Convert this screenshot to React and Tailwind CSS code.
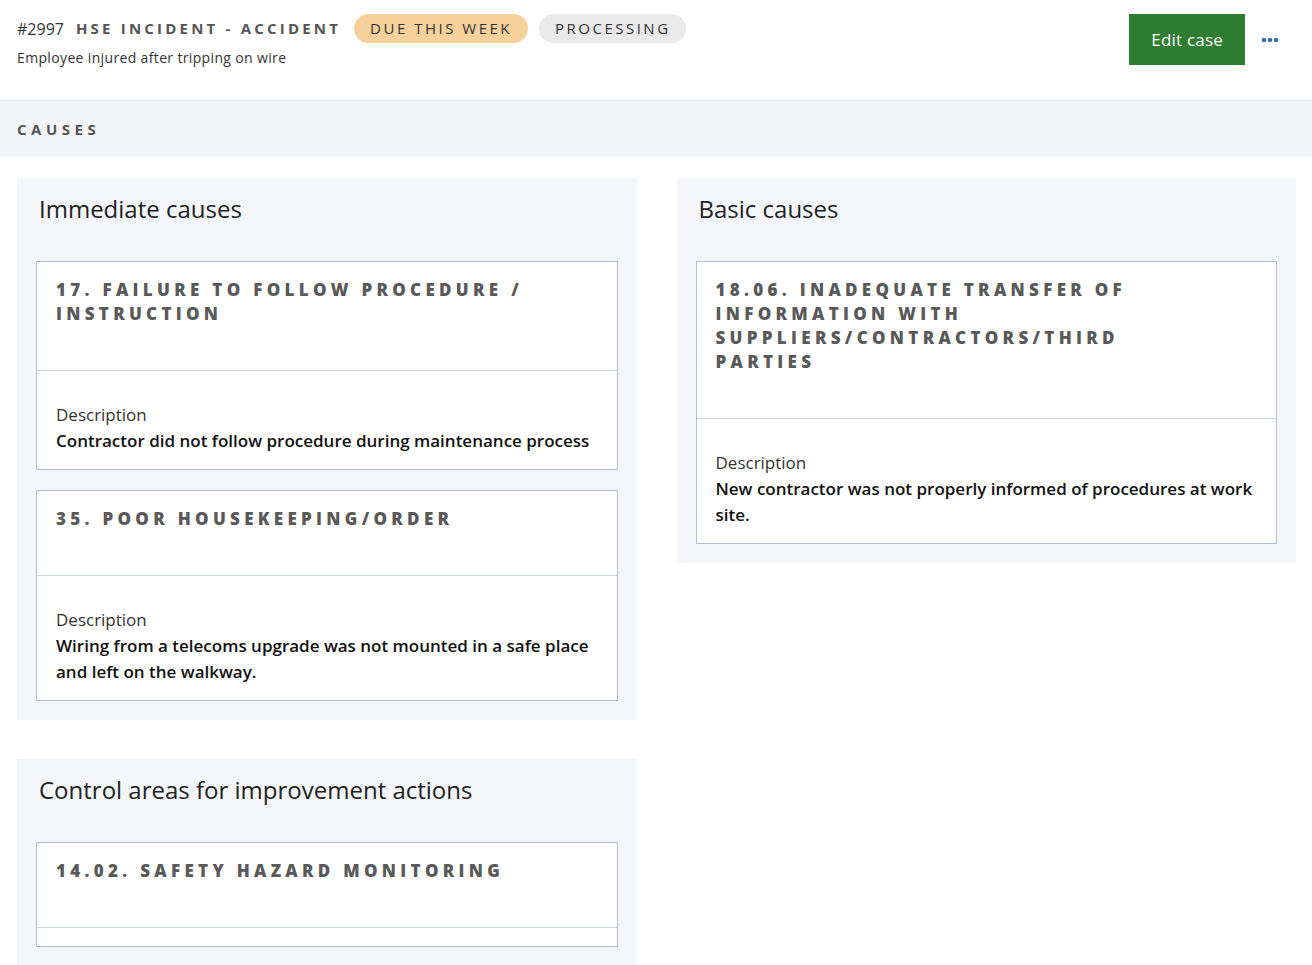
import React from "react";

const font = { fontFamily: "'Open Sans', 'Noto Sans', 'Liberation Sans', sans-serif" };

function Card({ title, desc, empty }) {
  return (
    <div className="bg-white border border-[#b3bfd6]">
      <div className="pl-[19px] pr-[70px] pt-[16px] pb-[44px] text-[17px] leading-[24px] font-extrabold tracking-[4.3px] text-[#595959] uppercase">
        {title}
      </div>
      <div className="border-t border-[#cfd6e4]">
        {empty ? (
          <div className="h-[18px]" />
        ) : (
          <div className="px-[19px] pt-[31px] pb-[15px] text-[17px] leading-[26px]">
            <div className="text-[#333]">Description</div>
            <div className="text-[#111] font-semibold">{desc}</div>
          </div>
        )}
      </div>
    </div>
  );
}

function Panel({ title, children }) {
  return (
    <div className="bg-[#f4f6fa] px-[19px] pt-[15px] pb-[19px]">
      <div className="pl-[3px] text-[24px] leading-[32px] text-[#222] mb-[36px]">{title}</div>
      <div className="flex flex-col gap-[20px]">{children}</div>
    </div>
  );
}

export default function App() {
  return (
    <div style={font} className="w-[1312px] h-[965px] overflow-hidden bg-white text-[#222]">
      <div className="h-[101px] border-b border-[#e6e8ee] flex justify-between items-start pl-[17px] pr-[33px] pt-[14px]">
        <div>
          <div className="flex items-center h-[29px]">
            <span className="text-[16px] text-[#333]">#2997</span>
            <span className="ml-[12px] text-[15px] font-bold tracking-[3.2px] text-[#555]">HSE INCIDENT - ACCIDENT</span>
            <span className="ml-[13px] h-[29px] flex items-center pl-[16px] pr-[16px] rounded-full bg-[#f7d19c] text-[15px] tracking-[2.5px] text-[#333]">DUE THIS WEEK</span>
            <span className="ml-[11px] h-[29px] flex items-center pl-[16px] pr-[15px] rounded-full bg-[#e9e9ea] text-[15px] tracking-[2.5px] text-[#333]">PROCESSING</span>
          </div>
          <div className="mt-[4px] text-[14px] tracking-[0.35px] text-[#333]">Employee injured after tripping on wire</div>
        </div>
        <div className="flex items-center gap-[16px]">
          <button className="h-[51px] px-[22px] bg-[#2f7d32] text-white text-[17px] tracking-[0.2px]">Edit case</button>
          <svg width="18" height="6" viewBox="0 0 18 6">
            <circle cx="3" cy="3" r="2.3" fill="#3a6db5" />
            <circle cx="9" cy="3" r="2.3" fill="#3a6db5" />
            <circle cx="15" cy="3" r="2.3" fill="#3a6db5" />
          </svg>
        </div>
      </div>
      <div className="h-[56px] bg-[#f4f5f9] flex items-center pl-[17px] text-[15px] font-bold tracking-[4.5px] text-[#555]">
        CAUSES
      </div>
      <div className="grid grid-cols-2 gap-[40px] pl-[17px] pr-[16px] pt-[21px]">
        <div className="flex flex-col gap-[39px]">
          <Panel title="Immediate causes">
            <Card title="17. Failure to follow procedure / instruction" desc="Contractor did not follow procedure during maintenance process" />
            <Card title="35. Poor housekeeping/order" desc="Wiring from a telecoms upgrade was not mounted in a safe place and left on the walkway." />
          </Panel>
          <Panel title="Control areas for improvement actions">
            <Card title="14.02. Safety hazard monitoring" empty />
          </Panel>
        </div>
        <div>
          <Panel title="Basic causes">
            <Card title="18.06. Inadequate transfer of information with suppliers/contractors/third parties" desc="New contractor was not properly informed of procedures at work site." />
          </Panel>
        </div>
      </div>
    </div>
  );
}
